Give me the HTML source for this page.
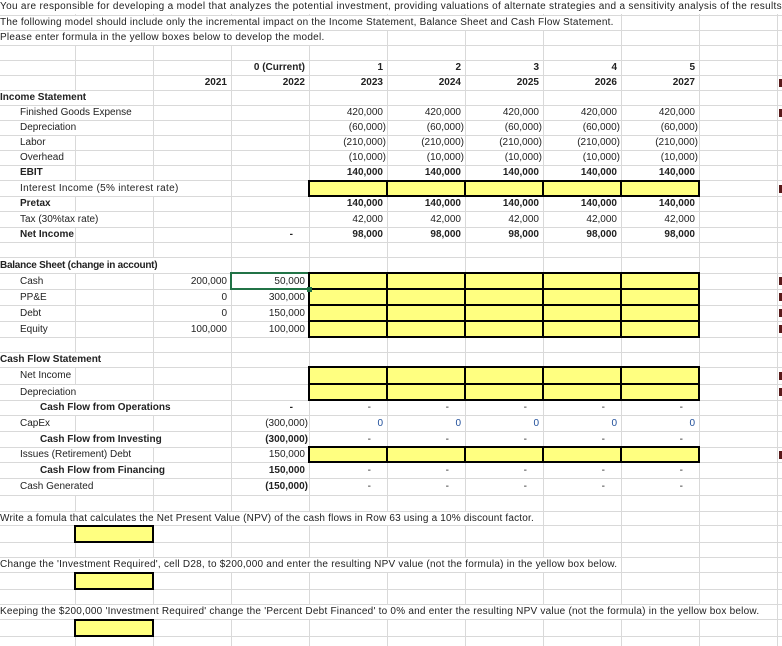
<!DOCTYPE html>
<html><head><meta charset="utf-8"><style>
*{margin:0;padding:0;box-sizing:border-box}
body{width:782px;height:646px;background:#fff;position:relative;overflow:hidden;font-family:"Liberation Sans",sans-serif;font-size:10px;color:#222}
.v{position:absolute;top:0;width:1px;height:646px;background:#d9d9d9}
.h{position:absolute;left:0;width:782px;height:1px;background:#d9d9d9}
.t{position:absolute;white-space:nowrap;background:#fff;padding-right:1px}
.r{position:absolute;white-space:nowrap;text-align:right;padding-right:4px}
.b{font-weight:bold}
.y{position:absolute;background:#ffff80;border:2px solid #000}
.m{position:absolute;left:779px;width:3px;height:8px;background:#5a1a1a}
</style></head><body>
<div class="v" style="left:75px"></div><div class="v" style="left:153px"></div><div class="v" style="left:231px"></div><div class="v" style="left:309px"></div><div class="v" style="left:387px"></div><div class="v" style="left:465px"></div><div class="v" style="left:543px"></div><div class="v" style="left:621px"></div><div class="v" style="left:699px"></div><div class="v" style="left:777px"></div>
<div class="h" style="top:15px"></div><div class="h" style="top:30px"></div><div class="h" style="top:45px"></div><div class="h" style="top:60px"></div><div class="h" style="top:75px"></div><div class="h" style="top:90px"></div><div class="h" style="top:105px"></div><div class="h" style="top:120px"></div><div class="h" style="top:135px"></div><div class="h" style="top:150px"></div><div class="h" style="top:165px"></div><div class="h" style="top:180px"></div><div class="h" style="top:196px"></div><div class="h" style="top:211px"></div><div class="h" style="top:227px"></div><div class="h" style="top:242px"></div><div class="h" style="top:257px"></div><div class="h" style="top:273px"></div><div class="h" style="top:289px"></div><div class="h" style="top:305px"></div><div class="h" style="top:321px"></div><div class="h" style="top:337px"></div><div class="h" style="top:352px"></div><div class="h" style="top:367px"></div><div class="h" style="top:384px"></div><div class="h" style="top:400px"></div><div class="h" style="top:415px"></div><div class="h" style="top:431px"></div><div class="h" style="top:447px"></div><div class="h" style="top:462px"></div><div class="h" style="top:478px"></div><div class="h" style="top:495px"></div><div class="h" style="top:511px"></div><div class="h" style="top:525px"></div><div class="h" style="top:542px"></div><div class="h" style="top:557px"></div><div class="h" style="top:572px"></div><div class="h" style="top:589px"></div><div class="h" style="top:604px"></div><div class="h" style="top:619px"></div><div class="h" style="top:636px"></div>

<div class="t" style="left:0;top:0;height:14px;line-height:14px;letter-spacing:0.32px">You are responsible for developing a model that analyzes the potential investment, providing valuations of alternate strategies and a sensitivity analysis of the results.</div>
<div class="t" style="left:0;top:16px;height:14px;line-height:14px;letter-spacing:0.22px">The following model should include only the incremental impact on the Income Statement, Balance Sheet and Cash Flow Statement.</div>
<div class="t" style="left:0;top:31px;height:14px;line-height:14px;letter-spacing:0.26px">Please enter formula in the yellow boxes below to develop the model.</div>

<div class="r b" style="left:231px;width:78px;top:61px;line-height:14px">0 (Current)</div>
<div class="r b" style="left:309px;width:78px;top:61px;line-height:14px">1</div>
<div class="r b" style="left:387px;width:78px;top:61px;line-height:14px">2</div>
<div class="r b" style="left:465px;width:78px;top:61px;line-height:14px">3</div>
<div class="r b" style="left:543px;width:78px;top:61px;line-height:14px">4</div>
<div class="r b" style="left:621px;width:78px;top:61px;line-height:14px">5</div>
<div class="r b" style="left:153px;width:78px;top:76px;line-height:14px">2021</div>
<div class="r b" style="left:231px;width:78px;top:76px;line-height:14px">2022</div>
<div class="r b" style="left:309px;width:78px;top:76px;line-height:14px">2023</div>
<div class="r b" style="left:387px;width:78px;top:76px;line-height:14px">2024</div>
<div class="r b" style="left:465px;width:78px;top:76px;line-height:14px">2025</div>
<div class="r b" style="left:543px;width:78px;top:76px;line-height:14px">2026</div>
<div class="r b" style="left:621px;width:78px;top:76px;line-height:14px">2027</div>

<div class="t b" style="left:0;top:91px;line-height:14px">Income Statement</div>
<div class="t" style="left:20px;top:106px;line-height:14px">Finished Goods Expense</div>
<div class="t" style="left:20px;top:121px;line-height:14px">Depreciation</div>
<div class="t" style="left:20px;top:136px;line-height:14px">Labor</div>
<div class="t" style="left:20px;top:151px;line-height:14px">Overhead</div>
<div class="t b" style="left:20px;top:166px;line-height:14px">EBIT</div>
<div class="t" style="left:20px;top:181px;line-height:15px;letter-spacing:0.3px">Interest Income (5% interest rate)</div>
<div class="t b" style="left:20px;top:197px;line-height:14px">Pretax</div>
<div class="t" style="left:20px;top:212px;line-height:15px">Tax (30%tax rate)</div>
<div class="t b" style="left:20px;top:228px;line-height:14px">Net Income</div>
<div class="r b" style="left:231px;width:78px;top:228px;line-height:14px;padding-right:16px">-</div>

<div class="r" style="left:309px;width:78px;top:106px;line-height:14px">420,000</div><div class="r" style="left:387px;width:78px;top:106px;line-height:14px">420,000</div><div class="r" style="left:465px;width:78px;top:106px;line-height:14px">420,000</div><div class="r" style="left:543px;width:78px;top:106px;line-height:14px">420,000</div><div class="r" style="left:621px;width:78px;top:106px;line-height:14px">420,000</div>
<div class="r" style="left:309px;width:78px;top:121px;line-height:14px;padding-right:1px">(60,000)</div><div class="r" style="left:387px;width:78px;top:121px;line-height:14px;padding-right:1px">(60,000)</div><div class="r" style="left:465px;width:78px;top:121px;line-height:14px;padding-right:1px">(60,000)</div><div class="r" style="left:543px;width:78px;top:121px;line-height:14px;padding-right:1px">(60,000)</div><div class="r" style="left:621px;width:78px;top:121px;line-height:14px;padding-right:1px">(60,000)</div>
<div class="r" style="left:309px;width:78px;top:136px;line-height:14px;padding-right:1px">(210,000)</div><div class="r" style="left:387px;width:78px;top:136px;line-height:14px;padding-right:1px">(210,000)</div><div class="r" style="left:465px;width:78px;top:136px;line-height:14px;padding-right:1px">(210,000)</div><div class="r" style="left:543px;width:78px;top:136px;line-height:14px;padding-right:1px">(210,000)</div><div class="r" style="left:621px;width:78px;top:136px;line-height:14px;padding-right:1px">(210,000)</div>
<div class="r" style="left:309px;width:78px;top:151px;line-height:14px;padding-right:1px">(10,000)</div><div class="r" style="left:387px;width:78px;top:151px;line-height:14px;padding-right:1px">(10,000)</div><div class="r" style="left:465px;width:78px;top:151px;line-height:14px;padding-right:1px">(10,000)</div><div class="r" style="left:543px;width:78px;top:151px;line-height:14px;padding-right:1px">(10,000)</div><div class="r" style="left:621px;width:78px;top:151px;line-height:14px;padding-right:1px">(10,000)</div>
<div class="r b" style="left:309px;width:78px;top:166px;line-height:14px">140,000</div><div class="r b" style="left:387px;width:78px;top:166px;line-height:14px">140,000</div><div class="r b" style="left:465px;width:78px;top:166px;line-height:14px">140,000</div><div class="r b" style="left:543px;width:78px;top:166px;line-height:14px">140,000</div><div class="r b" style="left:621px;width:78px;top:166px;line-height:14px">140,000</div>
<div class="r b" style="left:309px;width:78px;top:197px;line-height:14px">140,000</div><div class="r b" style="left:387px;width:78px;top:197px;line-height:14px">140,000</div><div class="r b" style="left:465px;width:78px;top:197px;line-height:14px">140,000</div><div class="r b" style="left:543px;width:78px;top:197px;line-height:14px">140,000</div><div class="r b" style="left:621px;width:78px;top:197px;line-height:14px">140,000</div>
<div class="r" style="left:309px;width:78px;top:212px;line-height:15px">42,000</div><div class="r" style="left:387px;width:78px;top:212px;line-height:15px">42,000</div><div class="r" style="left:465px;width:78px;top:212px;line-height:15px">42,000</div><div class="r" style="left:543px;width:78px;top:212px;line-height:15px">42,000</div><div class="r" style="left:621px;width:78px;top:212px;line-height:15px">42,000</div>
<div class="r b" style="left:309px;width:78px;top:228px;line-height:14px">98,000</div><div class="r b" style="left:387px;width:78px;top:228px;line-height:14px">98,000</div><div class="r b" style="left:465px;width:78px;top:228px;line-height:14px">98,000</div><div class="r b" style="left:543px;width:78px;top:228px;line-height:14px">98,000</div><div class="r b" style="left:621px;width:78px;top:228px;line-height:14px">98,000</div>

<div class="y" style="left:308px;top:180px;width:80px;height:17px"></div><div class="y" style="left:386px;top:180px;width:80px;height:17px"></div><div class="y" style="left:464px;top:180px;width:80px;height:17px"></div><div class="y" style="left:542px;top:180px;width:80px;height:17px"></div><div class="y" style="left:620px;top:180px;width:80px;height:17px"></div>

<div class="t b" style="left:0;top:258px;line-height:15px;letter-spacing:-0.25px">Balance Sheet (change in account)</div>
<div class="t" style="left:20px;top:274px;line-height:15px">Cash</div>
<div class="t" style="left:20px;top:290px;line-height:15px">PP&amp;E</div>
<div class="t" style="left:20px;top:306px;line-height:15px">Debt</div>
<div class="t" style="left:20px;top:322px;line-height:15px">Equity</div>
<div class="r" style="left:153px;width:78px;top:274px;line-height:15px">200,000</div>
<div class="r" style="left:153px;width:78px;top:290px;line-height:15px">0</div>
<div class="r" style="left:153px;width:78px;top:306px;line-height:15px">0</div>
<div class="r" style="left:153px;width:78px;top:322px;line-height:15px">100,000</div>
<div style="position:absolute;left:230px;top:272px;width:80px;height:18px;border:2px solid #217346;background:#fff"></div>
<div style="position:absolute;left:307px;top:287px;width:5px;height:5px;background:#217346;z-index:3"></div>
<div class="r" style="left:231px;width:78px;top:274px;line-height:15px">50,000</div>
<div class="r" style="left:231px;width:78px;top:290px;line-height:15px">300,000</div>
<div class="r" style="left:231px;width:78px;top:306px;line-height:15px">150,000</div>
<div class="r" style="left:231px;width:78px;top:322px;line-height:15px">100,000</div>
<div class="y" style="left:308px;top:272px;width:80px;height:18px"></div><div class="y" style="left:386px;top:272px;width:80px;height:18px"></div><div class="y" style="left:464px;top:272px;width:80px;height:18px"></div><div class="y" style="left:542px;top:272px;width:80px;height:18px"></div><div class="y" style="left:620px;top:272px;width:80px;height:18px"></div>
<div class="y" style="left:308px;top:288px;width:80px;height:18px"></div><div class="y" style="left:386px;top:288px;width:80px;height:18px"></div><div class="y" style="left:464px;top:288px;width:80px;height:18px"></div><div class="y" style="left:542px;top:288px;width:80px;height:18px"></div><div class="y" style="left:620px;top:288px;width:80px;height:18px"></div>
<div class="y" style="left:308px;top:304px;width:80px;height:18px"></div><div class="y" style="left:386px;top:304px;width:80px;height:18px"></div><div class="y" style="left:464px;top:304px;width:80px;height:18px"></div><div class="y" style="left:542px;top:304px;width:80px;height:18px"></div><div class="y" style="left:620px;top:304px;width:80px;height:18px"></div>
<div class="y" style="left:308px;top:320px;width:80px;height:18px"></div><div class="y" style="left:386px;top:320px;width:80px;height:18px"></div><div class="y" style="left:464px;top:320px;width:80px;height:18px"></div><div class="y" style="left:542px;top:320px;width:80px;height:18px"></div><div class="y" style="left:620px;top:320px;width:80px;height:18px"></div>

<div class="t b" style="left:0;top:353px;line-height:14px">Cash Flow Statement</div>
<div class="t" style="left:20px;top:368px;line-height:16px">Net Income</div>
<div class="t" style="left:20px;top:385px;line-height:15px">Depreciation</div>
<div class="t b" style="left:40px;top:401px;line-height:14px">Cash Flow from Operations</div>
<div class="t" style="left:20px;top:416px;line-height:15px">CapEx</div>
<div class="t b" style="left:40px;top:432px;line-height:15px">Cash Flow from Investing</div>
<div class="t" style="left:20px;top:448px;line-height:14px">Issues (Retirement) Debt</div>
<div class="t b" style="left:40px;top:463px;line-height:15px">Cash Flow from Financing</div>
<div class="t" style="left:20px;top:479px;line-height:16px">Cash Generated</div>

<div class="y" style="left:308px;top:366px;width:80px;height:19px"></div><div class="y" style="left:386px;top:366px;width:80px;height:19px"></div><div class="y" style="left:464px;top:366px;width:80px;height:19px"></div><div class="y" style="left:542px;top:366px;width:80px;height:19px"></div><div class="y" style="left:620px;top:366px;width:80px;height:19px"></div>
<div class="y" style="left:308px;top:383px;width:80px;height:18px"></div><div class="y" style="left:386px;top:383px;width:80px;height:18px"></div><div class="y" style="left:464px;top:383px;width:80px;height:18px"></div><div class="y" style="left:542px;top:383px;width:80px;height:18px"></div><div class="y" style="left:620px;top:383px;width:80px;height:18px"></div>
<div class="y" style="left:308px;top:446px;width:80px;height:17px"></div><div class="y" style="left:386px;top:446px;width:80px;height:17px"></div><div class="y" style="left:464px;top:446px;width:80px;height:17px"></div><div class="y" style="left:542px;top:446px;width:80px;height:17px"></div><div class="y" style="left:620px;top:446px;width:80px;height:17px"></div>

<div class="r b" style="left:231px;width:78px;top:401px;line-height:14px;padding-right:16px">-</div>
<div class="r" style="left:231px;width:78px;top:416px;line-height:15px;padding-right:1px">(300,000)</div>
<div class="r b" style="left:231px;width:78px;top:432px;line-height:15px;padding-right:1px">(300,000)</div>
<div class="r" style="left:231px;width:78px;top:448px;line-height:14px">150,000</div>
<div class="r b" style="left:231px;width:78px;top:463px;line-height:15px">150,000</div>
<div class="r b" style="left:231px;width:78px;top:479px;line-height:16px;padding-right:1px">(150,000)</div>

<div class="r" style="left:309px;width:78px;top:401px;line-height:14px;padding-right:16px">-</div><div class="r" style="left:387px;width:78px;top:401px;line-height:14px;padding-right:16px">-</div><div class="r" style="left:465px;width:78px;top:401px;line-height:14px;padding-right:16px">-</div><div class="r" style="left:543px;width:78px;top:401px;line-height:14px;padding-right:16px">-</div><div class="r" style="left:621px;width:78px;top:401px;line-height:14px;padding-right:16px">-</div>
<div class="r" style="left:309px;width:78px;top:416px;line-height:15px;color:#1f4e9a">0</div><div class="r" style="left:387px;width:78px;top:416px;line-height:15px;color:#1f4e9a">0</div><div class="r" style="left:465px;width:78px;top:416px;line-height:15px;color:#1f4e9a">0</div><div class="r" style="left:543px;width:78px;top:416px;line-height:15px;color:#1f4e9a">0</div><div class="r" style="left:621px;width:78px;top:416px;line-height:15px;color:#1f4e9a">0</div>
<div class="r" style="left:309px;width:78px;top:432px;line-height:15px;padding-right:16px">-</div><div class="r" style="left:387px;width:78px;top:432px;line-height:15px;padding-right:16px">-</div><div class="r" style="left:465px;width:78px;top:432px;line-height:15px;padding-right:16px">-</div><div class="r" style="left:543px;width:78px;top:432px;line-height:15px;padding-right:16px">-</div><div class="r" style="left:621px;width:78px;top:432px;line-height:15px;padding-right:16px">-</div>
<div class="r" style="left:309px;width:78px;top:463px;line-height:15px;padding-right:16px">-</div><div class="r" style="left:387px;width:78px;top:463px;line-height:15px;padding-right:16px">-</div><div class="r" style="left:465px;width:78px;top:463px;line-height:15px;padding-right:16px">-</div><div class="r" style="left:543px;width:78px;top:463px;line-height:15px;padding-right:16px">-</div><div class="r" style="left:621px;width:78px;top:463px;line-height:15px;padding-right:16px">-</div>
<div class="r" style="left:309px;width:78px;top:479px;line-height:16px;padding-right:16px">-</div><div class="r" style="left:387px;width:78px;top:479px;line-height:16px;padding-right:16px">-</div><div class="r" style="left:465px;width:78px;top:479px;line-height:16px;padding-right:16px">-</div><div class="r" style="left:543px;width:78px;top:479px;line-height:16px;padding-right:16px">-</div><div class="r" style="left:621px;width:78px;top:479px;line-height:16px;padding-right:16px">-</div>

<div class="t" style="left:0;top:512px;line-height:13px;letter-spacing:0.18px">Write a fomula that calculates the Net Present Value (NPV) of the cash flows in Row 63 using a 10% discount factor.</div>
<div class="y" style="left:74px;top:525px;width:80px;height:18px"></div>
<div class="t" style="left:0;top:558px;line-height:14px;letter-spacing:0.23px">Change the 'Investment Required', cell D28, to $200,000 and enter the resulting NPV value (not the formula) in the yellow box below.</div>
<div class="y" style="left:74px;top:572px;width:80px;height:18px"></div>
<div class="t" style="left:0;top:605px;line-height:14px;letter-spacing:0.23px">Keeping the $200,000 'Investment Required' change the 'Percent Debt Financed' to 0% and enter the resulting NPV value (not the formula) in the yellow box below.</div>
<div class="y" style="left:74px;top:619px;width:80px;height:18px"></div>

<div class="m" style="top:79px"></div><div class="m" style="top:109px"></div><div class="m" style="top:185px"></div><div class="m" style="top:277px"></div><div class="m" style="top:293px"></div><div class="m" style="top:309px"></div><div class="m" style="top:325px"></div><div class="m" style="top:372px"></div><div class="m" style="top:388px"></div><div class="m" style="top:451px"></div>
</body></html>
